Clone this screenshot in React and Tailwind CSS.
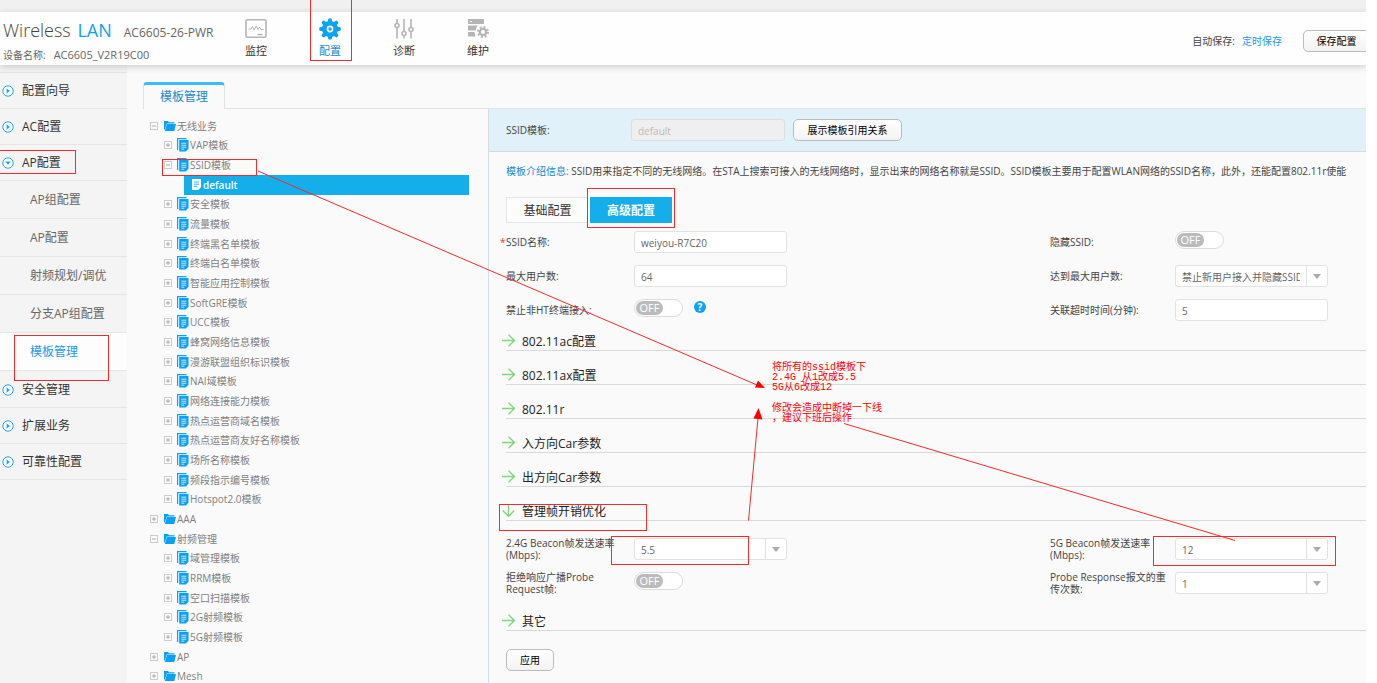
import React from 'react';
import { clsx } from 'clsx';

const navItems = [
  { name: '监控', icon: MonitorIcon },
  { name: '配置', icon: GearIcon, active: true },
  { name: '诊断', icon: SlidersIcon },
  { name: '维护', icon: ServerIcon },
];

const menuTop = ['配置向导', 'AC配置'];
const subMenu = ['AP组配置', 'AP配置', '射频规划/调优', '分支AP组配置', '模板管理'];
const menuBottom = ['安全管理', '扩展业务', '可靠性配置'];

const tree = [
  { name: '无线业务', level: 1, open: true },
  { name: 'VAP模板', level: 2 },
  { name: 'SSID模板', level: 2, open: true },
  { name: 'default', level: 3 },
  { name: '安全模板', level: 2 },
  { name: '流量模板', level: 2 },
  { name: '终端黑名单模板', level: 2 },
  { name: '终端白名单模板', level: 2 },
  { name: '智能应用控制模板', level: 2 },
  { name: 'SoftGRE模板', level: 2 },
  { name: 'UCC模板', level: 2 },
  { name: '蜂窝网络信息模板', level: 2 },
  { name: '漫游联盟组织标识模板', level: 2 },
  { name: 'NAI域模板', level: 2 },
  { name: '网络连接能力模板', level: 2 },
  { name: '热点运营商域名模板', level: 2 },
  { name: '热点运营商友好名称模板', level: 2 },
  { name: '场所名称模板', level: 2 },
  { name: '频段指示编号模板', level: 2 },
  { name: 'Hotspot2.0模板', level: 2 },
  { name: 'AAA', level: 1 },
  { name: '射频管理', level: 1, open: true },
  { name: '域管理模板', level: 2 },
  { name: 'RRM模板', level: 2 },
  { name: '空口扫描模板', level: 2 },
  { name: '2G射频模板', level: 2 },
  { name: '5G射频模板', level: 2 },
  { name: 'AP', level: 1 },
  { name: 'Mesh', level: 1 },
];

function MonitorIcon() {
  return (
    <svg className="w-[22px] h-[22px]" viewBox="0 0 22 22" fill="none" stroke="#b5b5b5">
      <rect x="1" y="1.8" width="20" height="17.5" rx="1.5" strokeWidth="1.6" />
      <path d="M3.5 11h2.5l1.5-2.5 1.7 3.5 2-4 1.8 3.5 1.5-2.5 1.5 2.5h2.5" strokeWidth="1" />
      <path d="M12.5 16.5h5" strokeWidth="1.4" />
    </svg>
  );
}

function GearIcon() {
  return (
    <svg className="w-[22px] h-[22px]" viewBox="0 0 24 24">
      <g fill="#0ba3f5">
        {[0, 45, 90, 135, 180, 225, 270, 315].map((a) => (
          <path key={a} d="M9.4 5L10.2 0.7Q12 -0.3 13.8 0.7L14.6 5z" transform={`rotate(${a} 12 12)`} />
        ))}
      </g>
      <circle cx="12" cy="12" r="6.2" fill="none" stroke="#0ba3f5" strokeWidth="5" />
      <circle cx="12" cy="12" r="1.8" fill="#0ba3f5" />
    </svg>
  );
}

function SlidersIcon() {
  return (
    <svg className="w-[22px] h-[22px]" viewBox="0 0 22 22" fill="none" stroke="#b5b5b5" strokeWidth="1.6">
      <path d="M4 1v4.5M4 9.5v11M11 1v12.5M11 17.5v3M18 1v8.5M18 13.500v7" />
      <circle cx="4" cy="7.5" r="2" />
      <circle cx="11" cy="15.5" r="2" />
      <circle cx="18" cy="11.5" r="2" />
    </svg>
  );
}

function ServerIcon() {
  return (
    <svg className="w-[22px] h-[22px]" viewBox="0 0 22 22">
      <path fill="#b5b5b5" d="M1 1h16v5H1zM1 7.500h9.500L8.500 12.500H1zM1 14h6.500l1 4.500H1z" />
      <path stroke="#fff" strokeWidth="1.2" d="M3 3.5h2" />
      <circle cx="16" cy="14" r="3.2" fill="none" stroke="#b5b5b5" strokeWidth="2.2" />
      <circle cx="16" cy="14" r="5" fill="none" stroke="#b5b5b5" strokeWidth="2" strokeDasharray="1.96 1.96" />
    </svg>
  );
}

function CircleArrow({ open }) {
  return (
    <svg className="w-3 h-3 shrink-0" viewBox="0 0 12 12">
      <circle cx="6" cy="6" r="5.2" fill="#fff" stroke="#1ea6ee" />
      <path d={open ? 'M3.2 4.6h5.6L6 7.8z' : 'M4.6 3.2v5.6L7.8 6z'} fill="#1ea6ee" />
    </svg>
  );
}

function FolderIcon() {
  return (
    <svg className="w-3 h-[10px] shrink-0" viewBox="0 0 12 10" fill="#08a0f8">
      <path d="M0 0h4l1 1.2h5.5v1.2H2.8L0.8 8.500H0z" />
      <path d="M3 3H12L10.3 10H0.8z" />
    </svg>
  );
}

function DocsIcon() {
  return (
    <svg className="w-3 h-[14px] shrink-0" viewBox="0 0 12 14">
      <path d="M.6 12V.6h8.9" fill="none" stroke="#08a0f8" strokeWidth="1.2" />
      <path d="M2.2 2H11.5v8.8L8.8 13.5H2.2z" fill="#08a0f8" />
      <path d="M4.3 5.2h5M4.3 7.2h5M4.3 9.2h5M4.3 11.2h3" stroke="#fff" strokeWidth=".8" />
    </svg>
  );
}

function DocIcon() {
  return (
    <svg className="w-[9px] h-[11px] shrink-0" viewBox="0 0 9 11">
      <path d="M0 0h9v8L6.5 11H0z" fill="#fff" />
      <path d="M2 3h5M2 5.2h5M2 7.4h3.5" stroke="#14aeeb" strokeWidth=".9" />
    </svg>
  );
}

function MenuItem({ name, open }) {
  return (
    <li className="h-9 border-b border-[#e6e6e6]">
      <button type="button" className="flex items-center w-full h-full gap-2 pl-[2px] text-xs text-[#333]">
        <CircleArrow open={open} />
        <span className="pt-px">{name}</span>
      </button>
    </li>
  );
}

function TreeRow({ name, level, open }) {
  if (level === 3) {
    return (
      <li role="treeitem" aria-level={level} aria-selected="true" className="flex flex-1 items-center gap-[2px] ml-[57px] mr-[19px] pl-2 bg-[#14aeeb] text-white font-semibold">
        <DocIcon />
        {name}
      </li>
    );
  }
  return (
    <li role="treeitem" aria-level={level} aria-expanded={!!open} className={clsx('flex flex-1 items-center', level === 1 ? 'pl-[23px]' : 'pl-[37px]')}>
      <svg className={clsx('w-2 h-2 shrink-0', level === 1 ? 'mr-[6px]' : 'mr-[5px]')} viewBox="0 0 8 8" fill="none" stroke="#ccc">
        <rect x=".5" y=".5" width="7" height="7" />
        <path d={open ? 'M2 4h4' : 'M2 4h4M4 2v4'} stroke="#999" strokeWidth=".8" />
      </svg>
      {level === 1 ? <FolderIcon /> : <DocsIcon />}
      <span className="pl-px">{name}</span>
    </li>
  );
}

function Section({ title, open }) {
  return (
    <h2 className="h-6 mb-[10px] border-b border-[#d9d9d9]">
      <button type="button" aria-expanded={!!open} className="flex items-center gap-[7px] h-[26px] -ml-1 text-xs text-[#222]">
        <svg className={clsx('w-[13px] h-[13px]', open && 'rotate-90')} viewBox="0 0 13 13" fill="none" stroke="#7fd67a" strokeWidth="1.3">
          <path d="M0 6.5h12M6.5 .8l6 5.7-6 5.7" />
        </svg>
        <span className="pt-[3px]">{title}</span>
      </button>
    </h2>
  );
}

function Field({ id, label, required, wide, children }) {
  return (
    <div className="flex items-center h-[34px]">
      <label htmlFor={id} className={clsx('relative shrink-0 leading-3', wide ? 'w-32 pr-3' : 'w-[125px]')}>
        {required && <span className="absolute -left-[6px] text-[#e33]">*</span>}
        {label}
      </label>
      {children}
    </div>
  );
}

function TextInput({ id, value }) {
  return (
    <input id={id} type="text" defaultValue={value} className="w-[153px] h-[22px] px-[6px] pt-[2px] rounded-[3px] border border-[#e2e2e2] bg-white text-[#666]" />
  );
}

function SelectInput({ id, value }) {
  return (
    <div className="relative w-[153px] h-[22px] rounded-[3px] border border-[#e2e2e2] bg-white text-[#666]">
      <select id={id} defaultValue={value} className="w-full h-full pl-[6px] pr-[27px] pt-[2px] appearance-none">
        <option>{value}</option>
      </select>
      <span className="absolute right-0 top-0 flex items-center justify-center w-[21px] h-full border-l border-[#e2e2e2] pointer-events-none">
        <svg className="w-2 h-[5px]" viewBox="0 0 8 5">
          <path d="M0 0h8L4 5z" fill="#aaa" />
        </svg>
      </span>
    </div>
  );
}

function Switch({ id }) {
  return (
    <span className="relative flex items-center w-[49px] h-[18px] mb-1 p-px rounded-full border border-[#dcdcdc] bg-white">
      <input id={id} type="checkbox" role="switch" className="absolute inset-0 appearance-none" />
      <span className="w-[27px] h-[14px] rounded-full bg-[#bbb] text-center text-[11px] leading-[14px] text-white">OFF</span>
    </span>
  );
}

function Annotations() {
  return (
    <>
      <svg className="absolute left-0 top-0 w-[1366px] h-[683px]" viewBox="0 0 1366 683" fill="none" stroke="#f52a2a">
        <rect x="310.5" y="-2.5" width="41" height="63" />
        <rect x="-1.5" y="150.5" width="77" height="23" />
        <rect x="14.5" y="335.5" width="94" height="45" />
        <rect x="162.5" y="159.5" width="94" height="16" />
        <rect x="587.5" y="188.5" width="87" height="39" />
        <rect x="499.5" y="504.5" width="147" height="26" />
        <rect x="611.5" y="536.5" width="137" height="28" />
        <rect x="1153.5" y="536.5" width="182" height="29" />
        <path d="M258 171L757 385M748.5 520.5L758 418M844 423.5L1235 540.5" />
        <path d="M765 388L758 380.5L755 387.5zM758.5 408L753.5 418.5L762.5 419.5z" fill="#f00" stroke="none" />
      </svg>
      <div className="absolute left-[772px] top-[363px] whitespace-nowrap font-['Liberation_Mono','Noto_Sans_CJK_SC',monospace] text-[10px] leading-[10px] text-[#f00]">
        <p>将所有的ssid模板下</p>
        <p>2.4G 从1改成5.5</p>
        <p>5G从6改成12</p>
        <p className="pt-[11px]">修改会造成中断掉一下线</p>
        <p>，建议下班后操作</p>
      </div>
    </>
  );
}

export default function App() {
  return (
    <div className="h-screen pr-[11px] bg-white font-['Open_Sans','Noto_Sans_CJK_SC',sans-serif] text-[10px] text-[#444]">
      <div className="relative flex flex-col h-full overflow-hidden bg-[#fafafa]">
        <div className="h-3 shrink-0 bg-[#f0f0f0]" />

        {/* Header */}
        <header className="relative z-10 flex h-[53px] shrink-0 bg-[#fefefe] shadow-[0_2px_7px_rgba(0,0,0,0.18)]">
          <div className="w-[219px] shrink-0 pl-[3px] pt-1 whitespace-nowrap text-[#666]">
            <h1 className="flex items-baseline gap-2 leading-7">
              <span className="text-lg leading-7 font-light text-[#444]">
                Wireless <span className="pl-[2px] font-normal text-[#0ba3f5]">LAN</span>
              </span>
              <span className="pl-1 text-xs leading-7">AC6605-26-PWR</span>
            </h1>
            <p className="flex items-center gap-2 leading-4">
              <span>设备名称:</span>
              <span className="text-[11px]">AC6605_V2R19C00</span>
            </p>
          </div>
          <nav className="flex">
            {navItems.map((item) => (
              <a key={item.name} href="#" className={clsx('flex flex-col items-center w-[74px] pt-[6px] text-[11px] leading-[22px]', item.active ? 'text-[#1689cc]' : 'text-[#333]')}>
                <item.icon />
                {item.name}
              </a>
            ))}
          </nav>
          <div className="flex items-center gap-[7px] ml-auto -mr-1 pb-px pt-[6px]">
            <span>自动保存:</span>
            <a href="#" className="text-[#1b9ae8]">定时保存</a>
            <button type="button" className="h-[22px] w-[67px] ml-[14px] rounded-[5px] border border-[#bbb] bg-gradient-to-b from-white to-[#f3f3f3] text-black">保存配置</button>
          </div>
        </header>

        <div className="flex flex-1 min-h-0">
          {/* Side menu */}
          <aside className="w-[127px] shrink-0 bg-[#f4f4f4]">
            <ul>
              <li className="h-2 border-b border-[#e6e6e6]" />
              {menuTop.map((name) => <MenuItem key={name} name={name} />)}
              <MenuItem name="AP配置" open />
              <li>
                <ul className="pb-px">
                  {subMenu.map((name) => (
                    <li key={name} className={clsx('h-[38px] border-b border-[#e6e6e6]', name === '模板管理' && 'bg-[#fdfdfd]')}>
                      <a href="#" className={clsx('flex items-center h-full pl-[30px] text-xs', name === '模板管理' ? 'text-[#1b9ae8]' : 'text-[#666]')}>{name}</a>
                    </li>
                  ))}
                </ul>
              </li>
              {menuBottom.map((name) => <MenuItem key={name} name={name} />)}
            </ul>
          </aside>

          <div className="flex flex-col flex-1 min-w-0">
            {/* Page tab */}
            <div className="flex shrink-0 pt-[17px]">
              <div className="w-4" />
              <button type="button" className="w-[82px] h-[27px] rounded-t-[4px] border-x border-t-3 border-x-[#e2e2e2] border-t-[#3cbcfa] text-xs text-[#1689cc]">模板管理</button>
              <div className="flex-1 border-b border-[#e2e2e2]" />
            </div>

            <div className="flex flex-1 min-h-0">
              <ul role="tree" className="flex flex-col w-[361px] shrink-0 pt-[7px] -mb-[3px] whitespace-nowrap leading-4 text-[#808080]">
                {tree.map((row) => <TreeRow key={row.name} {...row} />)}
              </ul>

              <main className="flex-1 min-w-0 border-l border-[#d3dde2]">
                <div className="flex items-center h-[43px] pl-[17px] border-b border-[#d5dadd] bg-[#e1f1fa]">
                  <label htmlFor="profile" className="w-[125px]">SSID模板:</label>
                  <input id="profile" type="text" disabled defaultValue="default" className="w-[154px] h-[22px] px-[6px] pt-[2px] rounded-[3px] border border-[#dedede] bg-[#efefef] text-[#bbb]" />
                  <button type="button" className="h-[22px] w-[109px] ml-2 rounded-[5px] border border-[#bbb] bg-gradient-to-b from-white to-[#f3f3f3] text-black">展示模板引用关系</button>
                </div>

                <div className="pl-[17px]">
                  <p className="pt-[9px] leading-5 overflow-hidden whitespace-nowrap">
                    <span className="text-[#1689cc]">模板介绍信息:</span> SSID用来指定不同的无线网络。在STA上搜索可接入的无线网络时，显示出来的网络名称就是SSID。SSID模板主要用于配置WLAN网络的SSID名称，此外，还能配置802.11r使能
                  </p>

                  <div className="flex gap-[2px] mt-4 mb-[2px] text-xs">
                    <button type="button" className="w-[82px] h-[26px] pt-[2px] border border-r-0 border-[#e6e6e6] bg-[#fdfdfd] text-[#333]">基础配置</button>
                    <button type="button" className="w-[82px] h-[26px] pt-[2px] bg-[#14aeeb] font-bold text-white">高级配置</button>
                  </div>

                  <div className="grid grid-cols-[minmax(0,1fr)_316px]">
                    <Field id="ssid" label="SSID名称:" required wide><TextInput id="ssid" value="weiyou-R7C20" /></Field>
                    <Field id="hide" label="隐藏SSID:"><Switch id="hide" /></Field>
                    <Field id="max" label="最大用户数:" wide><TextInput id="max" value="64" /></Field>
                    <Field id="reach" label="达到最大用户数:"><SelectInput id="reach" value="禁止新用户接入并隐藏SSID" /></Field>
                    <Field id="ht" label="禁止非HT终端接入:" wide>
                      <Switch id="ht" />
                      <button type="button" aria-label="帮助" className="w-3 h-3 ml-[11px] mb-[6px] rounded-full bg-[#0ba3f5] text-[10px] leading-3 font-bold text-white">?</button>
                    </Field>
                    <Field id="timeout" label="关联超时时间(分钟):"><TextInput id="timeout" value="5" /></Field>
                  </div>

                  <Section title="802.11ac配置" />
                  <Section title="802.11ax配置" />
                  <Section title="802.11r" />
                  <Section title="入方向Car参数" />
                  <Section title="出方向Car参数" />
                  <Section title="管理帧开销优化" open />

                  <div className="grid grid-cols-[minmax(0,1fr)_316px] pt-px pb-[7px]">
                    <Field id="b24" label="2.4G Beacon帧发送速率(Mbps):" wide><SelectInput id="b24" value="5.5" /></Field>
                    <Field id="b5" label="5G Beacon帧发送速率(Mbps):"><SelectInput id="b5" value="12" /></Field>
                    <Field id="probe" label="拒绝响应广播Probe Request帧:" wide><Switch id="probe" /></Field>
                    <Field id="retry" label="Probe Response报文的重传次数:"><SelectInput id="retry" value="1" /></Field>
                  </div>

                  <Section title="其它" />

                  <button type="button" className="w-12 h-[22px] mt-2 rounded-[5px] border border-[#bbb] bg-gradient-to-b from-white to-[#f3f3f3] text-black">应用</button>
                </div>
              </main>
            </div>
          </div>
        </div>

        <div className="absolute inset-0 z-20 pointer-events-none">
          <Annotations />
        </div>
      </div>
    </div>
  );
}
